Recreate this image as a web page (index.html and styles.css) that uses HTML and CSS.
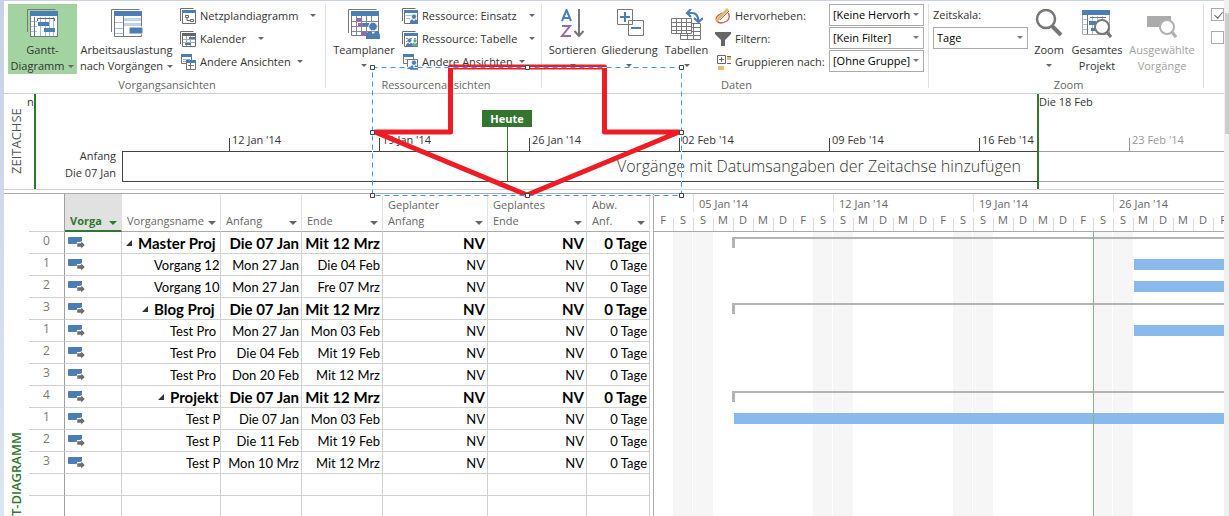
FILE: index.html
```html
<!DOCTYPE html>
<html lang="de">
<head>
<meta charset="utf-8">
<title>Projektplan</title>
<link rel="stylesheet" href="styles.css">
</head>
<body>
<svg class="defs" aria-hidden="true">
  <symbol id="i-link" viewBox="0 0 17 12">
    <path fill="#4a7eb5" d="M1 0h13v5H9v2H1q-1 0-1-1V1q0-1 1-1z"/>
    <path fill="#6e6e6e" d="M9 6h4V4l4 4-4 4v-2H9z" stroke="#fff" stroke-width=".5"/>
  </symbol>
  <symbol id="i-person" viewBox="0 0 14 17">
    <circle cx="7" cy="4.500" r="4.300" stroke="#fff" stroke-width=".8"/>
    <path d="M0 17v-3q0-4 4-5l3 3 3-3q4 1 4 5v3z"/>
  </symbol>
  <symbol id="i-sheet" viewBox="0 0 16 16">
    <path fill="none" stroke="#6e6e6e" d="M.5 13V.5h13"/>
    <path fill="#fff" stroke="#6e6e6e" d="M2.500 2.500h13v13h-13z"/>
    <path fill="#4a7eb5" d="M2 2h14v3H2z"/>
  </symbol>
</svg>
<div class="frame">
<main class="app">
  <header class="ribbon">
    <section class="group views">
      <div class="tools">
        <button class="big active">
          <svg class="ico" viewBox="0 0 32 28" width="32" height="28"><path fill="none" stroke="#777" d="M.5 23V.5h28"/><path fill="#fff" stroke="#777" d="M3.500 3.500h27v24h-27z"/><path stroke="#9fc1e0" d="M4 12.500h6M4 17.500h6M4 22.500h6M13.500 8v19M18.500 8v19M22.500 8v19M26.500 8v19"/><path stroke="#777" d="M7.500 8v19"/><path fill="#4a7eb5" d="M3 2h28v5H3zM11 13h11v4H11zM17 19h11v4H17z"/><path fill="none" stroke="#666" d="M10.500 12V9.500h17V12"/></svg>
          <span>Gantt-<br>Diagramm<i class="caret"></i></span>
        </button>
        <button class="big load">
          <svg class="ico" viewBox="0 0 32 28" width="32" height="28"><path fill="none" stroke="#777" d="M.5 23V.5h28"/><path fill="#fff" stroke="#777" d="M3.500 3.500h27v24h-27z"/><path stroke="#9fc1e0" d="M4 13.500h8M4 19.500h8M4 24.500h8"/><path fill="#bfd6ea" d="M13 9h17v3H13zM13 14h17v3H13z"/><path stroke="#777" d="M12.500 7v20"/><path fill="#4a7eb5" d="M3 2h28v5H3z"/><rect x="18" y="18" width="14" height="7" rx="1" fill="#4a7eb5" stroke="#fff"/></svg>
          <span>Arbeitsauslastung<br>nach Vorgängen<i class="caret"></i></span>
        </button>
        <div class="stack">
          <button class="small"><svg viewBox="0 0 16 16" width="16" height="16"><use href="#i-sheet"/><path fill="none" stroke="#666" d="M5.500 7.500h3v2h-3zM10.500 11.500h3v2h-3zM7 10v2.500h3"/></svg>Netzplandiagramm<i class="caret far"></i></button>
          <button class="small"><svg viewBox="0 0 16 16" width="16" height="16"><use href="#i-sheet"/><path fill="#666" d="M2 2h14v3H2z"/><path stroke="#aaa" d="M3 8.500h12M3 11.500h12M6.500 5v10M10.500 5v10"/><path fill="#4a7eb5" d="M9 6h6v2H9zM5 12h6v2H5z"/></svg>Kalender<i class="caret far"></i></button>
          <button class="small"><svg viewBox="0 0 16 16" width="16" height="16"><path fill="#fff" stroke="#777" d="M1.500.5h10v9h-10z"/><path fill="#4a7eb5" d="M1 0h11v3H1z"/><path stroke="#8aaed0" d="M3 5.500h7M3 7.500h4"/><path fill="#fff" stroke="#777" d="M6.500 6.500h9v9h-9z"/><path fill="#4a7eb5" d="M6 6h10v3H6z"/><path stroke="#777" d="M8 11.500h6M10.500 9v6"/></svg>Andere Ansichten<i class="caret"></i></button>
        </div>
      </div>
      <h2>Vorgangsansichten</h2>
    </section>
    <section class="group resources">
      <div class="tools">
        <button class="big">
          <svg class="ico" viewBox="0 0 32 30" width="32" height="30"><path fill="none" stroke="#777" d="M.5 24V.5h28"/><path fill="#fff" stroke="#777" d="M3.500 3.500h27v23h-27z"/><path fill="none" stroke="#888" d="M4 12.500h26M4 17.500h26M4 22.500h26M8.500 7v19M13.500 7v19M18.500 7v19M23.500 7v19"/><path fill="#4a7eb5" d="M3 2h28v5H3zM15 14h6v3h-6z"/><path fill="#9868b8" d="M8 9h6v3H8zM10 14h5v3h-5zM13 23h5v4h-5z"/><use href="#i-person" x="18" y="13" width="14" height="17" fill="#4a7eb5"/></svg>
          <span>Teamplaner<i class="caret below"></i></span>
        </button>
        <div class="stack">
          <button class="small"><svg viewBox="0 0 16 16" width="16" height="16"><use href="#i-sheet"/><path stroke="#9fc1e0" d="M4 7.500h6M4 10.500h4"/><use href="#i-person" x="8" y="6" width="8" height="10" fill="#4a7eb5"/></svg>Ressource: Einsatz<i class="caret far"></i></button>
          <button class="small"><svg viewBox="0 0 16 16" width="16" height="16"><use href="#i-sheet"/><path stroke="#888" stroke-dasharray="2 2" d="M4 7.500h10M4 10.500h4"/><use href="#i-person" x="4" y="7" width="7" height="9" fill="#4a7eb5"/><use href="#i-person" x="10" y="7" width="6" height="9" fill="#65a58b"/></svg>Ressource: Tabelle<i class="caret far"></i></button>
          <button class="small"><svg viewBox="0 0 16 16" width="16" height="16"><path fill="#fff" stroke="#777" d="M1.500.5h10v9h-10z"/><path fill="#4a7eb5" d="M1 0h11v3H1z"/><path stroke="#8aaed0" d="M3 5.500h7"/><path fill="#fff" stroke="#777" d="M5.500 5.500h10v9h-10z"/><use href="#i-person" x="8" y="6" width="8" height="10" fill="#4a7eb5"/></svg>Andere Ansichten<i class="caret"></i></button>
        </div>
      </div>
      <h2>Ressourcenansichten</h2>
    </section>
    <section class="group data">
      <div class="tools">
        <button class="big">
          <svg class="ico" viewBox="0 0 26 30" width="26" height="30"><path fill="none" stroke="#4a7eb5" stroke-width="2" d="M2 12 6.500 1 11 12M3.500 9h6"/><path fill="none" stroke="#9868b8" stroke-width="2" d="M2 17h8L2 27h9"/><path fill="none" stroke="#777" stroke-width="2" d="M19 0v27M14.500 22l4.500 5 4.500-5"/></svg>
          <span>Sortieren<i class="caret below"></i></span>
        </button>
        <button class="big">
          <svg class="ico" viewBox="0 0 28 28" width="28" height="28"><path fill="#fff" stroke="#777" d="M1.500.5h15v15h-15zM12.500 11.500h15v15h-15z"/><path stroke="#4a7eb5" stroke-width="2" d="M4 8h10M9 3v10M15 19h10"/></svg>
          <span>Gliederung<i class="caret below"></i></span>
        </button>
        <button class="big">
          <svg class="ico" viewBox="0 0 32 32" width="32" height="32"><path fill="#fff" stroke="#777" d="M9.500 14.500h20v16h-20zM9.500 22.500h20M9.500 26.500h20M16.500 14.500v16M22.500 14.500v16M9.500 18.500h20"/><path fill="#fff" stroke="#777" d="M.5 9.500h20v15H.5zM.5 13.500h20M.5 17.500h20M.5 21.500h20M5.500 9.500v15M10.500 9.500v15M15.500 9.500v15"/><path fill="none" stroke="#4a7eb5" stroke-width="2.200" d="M16 4h5q6 0 6.500 8M20 0l-4 4 4 4M23 9l4.500 4L32 9"/></svg>
          <span>Tabellen<i class="caret below"></i></span>
        </button>
        <div class="fields">
          <label for="hl"><svg viewBox="0 0 16 16" width="16" height="16"><path fill="none" stroke="#d9573f" stroke-width="1.300" d="M7 5Q-1 9 2 13t10 0q4-4 1-8"/><path stroke="#e8b76b" stroke-width="3" d="M1 13 13 1"/><path stroke="#777" stroke-width="1" d="m5 12 9-9"/></svg>Hervorheben:</label>
          <span class="pick"><select id="hl"><option>[Keine Hervorh</option></select></span>
          <label for="fl"><svg viewBox="0 0 16 16" width="16" height="16"><path fill="#666" d="M0 1h16v2L10 9v6H6V9L0 3z"/></svg>Filtern:</label>
          <span class="pick"><select id="fl"><option>[Kein Filter]</option></select></span>
          <label for="gr"><svg viewBox="0 0 16 16" width="16" height="16"><path fill="none" stroke="#666" d="M2.500 1.500h8v8h-8zM4 5.500h5M6.500 3v5M12 9.500h4"/><path fill="#e8bd76" d="M12 2h4v4h-4zM3 12h6v4H3z"/><path stroke="#666" d="M12 2.500h4"/></svg>Gruppieren nach:</label>
          <span class="pick"><select id="gr"><option>[Ohne Gruppe]</option></select></span>
        </div>
      </div>
      <h2>Daten</h2>
    </section>
    <section class="group zoom">
      <div class="tools">
        <div class="scale">
          <label for="zs">Zeitskala:</label>
          <span class="pick"><select id="zs"><option>Tage</option></select></span>
        </div>
        <button class="big">
          <svg class="ico" viewBox="0 0 28 28" width="28" height="28"><circle cx="11" cy="10" r="9" fill="#fff" stroke="#777" stroke-width="2.500"/><path stroke="#777" stroke-width="4" d="m17 17 9 9"/></svg>
          <span>Zoom<i class="caret below"></i></span>
        </button>
        <button class="big whole">
          <svg class="ico" viewBox="0 0 30 30" width="30" height="30"><path fill="#fff" stroke="#aaa" d="M.5 1.500h27v24H.5z"/><path stroke="#9fc1e0" d="M1 10.500h5M1 15.500h5M1 20.500h5M10.500 7v18M15.500 7v18M20.500 7v18"/><path stroke="#777" d="M5.500 6v19M8 8.500h16"/><path fill="#4a7eb5" d="M0 1h28v5H0zM7 12h7v4H7zM9 19h5v3H9z"/><circle cx="20" cy="18" r="7" fill="#fff" stroke="#777" stroke-width="2"/><path stroke="#777" stroke-width="3" d="m25 23 4 5"/></svg>
          <span>Gesamtes<br>Projekt</span>
        </button>
        <button class="big picked" disabled>
          <svg class="ico" viewBox="0 0 30 30" width="30" height="30"><path fill="#ababab" d="M0 7h24v11H0z"/><circle cx="20" cy="18" r="7" fill="#fff" stroke="#b0b0b0" stroke-width="2"/><path stroke="#b0b0b0" stroke-width="3" d="m25 23 4 5"/></svg>
          <span>Ausgewählte<br>Vorgänge</span>
        </button>
      </div>
      <h2>Zoom</h2>
    </section>
    <section class="options">
      <input type="checkbox" checked aria-label="Zeitachse">
      <input type="checkbox" aria-label="Details">
    </section>
  </header>

  <section class="timeline">
    <div class="side">ZEITACHSE</div>
    <div class="start"><span>Anfang</span><span>Die 07 Jan</span></div>
    <div class="track">
      <div class="ticks"><span>12 Jan '14</span><span>19 Jan '14</span><span>26 Jan '14</span><span>02 Feb '14</span><span>09 Feb '14</span><span>16 Feb '14</span><span class="out">23 Feb '14</span></div>
      <div class="band"><p class="inside">Vorgänge mit Datumsangaben der Zeitachse hinzufügen</p><p class="outside"></p></div>
    </div>
    <span class="edge from">n</span>
    <span class="edge to">Die 18 Feb</span>
    <span class="today">Heute</span>
  </section>

  <section class="gantt">
    <div class="side green">T-DIAGRAMM</div>
    <table class="tasks">
      <colgroup><col class="c-num"><col class="c-mode"><col class="c-name"><col class="c-date"><col class="c-date"><col class="c-pstart"><col class="c-pend"><col class="c-var"></colgroup>
      <thead><tr><td></td><th class="sel"><div>Vorga</div></th><th><div>Vorgangsname</div></th><th><div>Anfang</div></th><th><div>Ende</div></th><th><div>Geplanter<br>Anfang</div></th><th><div>Geplantes<br>Ende</div></th><th><div>Abw.<br>Anf.</div></th></tr></thead>
      <tbody>
        <tr class="sum"><td>0</td><td><svg width="17" height="12"><use href="#i-link"/></svg></td><td class="l0">Master Proj</td><td>Die 07 Jan</td><td>Mit 12 Mrz</td><td>NV</td><td>NV</td><td>0 Tage</td></tr>
        <tr><td>1</td><td><svg width="17" height="12"><use href="#i-link"/></svg></td><td class="l1">Vorgang 12</td><td>Mon 27 Jan</td><td>Die 04 Feb</td><td>NV</td><td>NV</td><td>0 Tage</td></tr>
        <tr><td>2</td><td><svg width="17" height="12"><use href="#i-link"/></svg></td><td class="l1">Vorgang 10</td><td>Mon 27 Jan</td><td>Fre 07 Mrz</td><td>NV</td><td>NV</td><td>0 Tage</td></tr>
        <tr class="sum"><td>3</td><td><svg width="17" height="12"><use href="#i-link"/></svg></td><td class="l1">Blog Proj</td><td>Die 07 Jan</td><td>Mit 12 Mrz</td><td>NV</td><td>NV</td><td>0 Tage</td></tr>
        <tr><td>1</td><td><svg width="17" height="12"><use href="#i-link"/></svg></td><td class="l2">Test Pro</td><td>Mon 27 Jan</td><td>Mon 03 Feb</td><td>NV</td><td>NV</td><td>0 Tage</td></tr>
        <tr><td>2</td><td><svg width="17" height="12"><use href="#i-link"/></svg></td><td class="l2">Test Pro</td><td>Die 04 Feb</td><td>Mit 19 Feb</td><td>NV</td><td>NV</td><td>0 Tage</td></tr>
        <tr><td>3</td><td><svg width="17" height="12"><use href="#i-link"/></svg></td><td class="l2">Test Pro</td><td>Don 20 Feb</td><td>Mit 12 Mrz</td><td>NV</td><td>NV</td><td>0 Tage</td></tr>
        <tr class="sum"><td>4</td><td><svg width="17" height="12"><use href="#i-link"/></svg></td><td class="l2">Projekt</td><td>Die 07 Jan</td><td>Mit 12 Mrz</td><td>NV</td><td>NV</td><td>0 Tage</td></tr>
        <tr><td>1</td><td><svg width="17" height="12"><use href="#i-link"/></svg></td><td class="l3">Test P</td><td>Die 07 Jan</td><td>Mon 03 Feb</td><td>NV</td><td>NV</td><td>0 Tage</td></tr>
        <tr><td>2</td><td><svg width="17" height="12"><use href="#i-link"/></svg></td><td class="l3">Test P</td><td>Die 11 Feb</td><td>Mit 19 Feb</td><td>NV</td><td>NV</td><td>0 Tage</td></tr>
        <tr><td>3</td><td><svg width="17" height="12"><use href="#i-link"/></svg></td><td class="l3">Test P</td><td>Mon 10 Mrz</td><td>Mit 12 Mrz</td><td>NV</td><td>NV</td><td>0 Tage</td></tr>
        <tr><td></td><td></td><td></td><td></td><td></td><td></td><td></td><td></td></tr>
        <tr><td></td><td></td><td></td><td></td><td></td><td></td><td></td><td></td></tr>
      </tbody>
    </table>
    <div class="chart">
      <div class="cal">
        <div class="weeks"><span>05 Jan '14</span><span>12 Jan '14</span><span>19 Jan '14</span><span>26 Jan '14</span></div>
        <div class="days"><span>F</span><span>S</span><span>S</span><span>M</span><span>D</span><span>M</span><span>D</span><span>F</span><span>S</span><span>S</span><span>M</span><span>D</span><span>M</span><span>D</span><span>F</span><span>S</span><span>S</span><span>M</span><span>D</span><span>M</span><span>D</span><span>F</span><span>S</span><span>S</span><span>M</span><span>D</span><span>M</span><span>D</span><span>F</span></div>
      </div>
      <div class="bars">
        <div class="row"><i class="sumbar" style="margin-left:78px"></i></div>
        <div class="row"><i class="bar" style="margin-left:480px"></i></div>
        <div class="row"><i class="bar" style="margin-left:480px"></i></div>
        <div class="row"><i class="sumbar" style="margin-left:78px"></i></div>
        <div class="row"><i class="bar" style="margin-left:480px"></i></div>
        <div class="row"></div>
        <div class="row"></div>
        <div class="row"><i class="sumbar" style="margin-left:78px"></i></div>
        <div class="row"><i class="bar" style="margin-left:80px"></i></div>
        <i class="now"></i>
      </div>
    </div>
  </section>
</main>
<div class="scroll"><i></i></div>
</div>
<svg class="arrow" viewBox="0 0 316 136" width="316" height="136" aria-hidden="true">
  <path fill="none" stroke="#ee1c24" stroke-width="5" stroke-linejoin="round" d="M81.500 5h154v65H310L158 133 6 70h75.500z"/>
  <path fill="none" stroke="#fff" d="M3.500 5.500h309v128H3.500z"/>
  <path fill="none" stroke="#3399ff" stroke-dasharray="5 4" d="M3.500 5.500h309v128H3.500z"/>
  <path fill="#fff" stroke="#444" d="M1.500 3.500h4v4h-4zM156.500 3.500h4v4h-4zM310.500 3.500h4v4h-4zM1.500 68.500h4v4h-4zM310.500 68.500h4v4h-4zM1.500 131.500h4v4h-4zM156.500 131.500h4v4h-4zM310.500 131.500h4v4h-4z"/>
</svg>
</body>
</html>
```
FILE: styles.css
```css
* { box-sizing: border-box; }
body {
  margin: 0;
  height: 100vh;
  overflow: hidden;
  position: relative;
  font: 11px/16px "Open Sans", "Noto Sans", sans-serif;
  color: #333;
  background: #fff;
}
.defs { position: absolute; width: 0; height: 0; }
.frame {
  display: flex;
  height: 100%;
  padding-left: 4px;
  background: linear-gradient(#c6d1e5, #dbe5f3);
}
.app {
  flex: 1;
  min-width: 0;
  display: flex;
  flex-direction: column;
  background: #fff;
  overflow: hidden;
}
.scroll { width: 5px; padding: 13px 0 0 1px; background: #f0f0f0; }
.scroll i { display: block; height: 121px; background: #cdcdcd; }

/* Ribbon */
.ribbon {
  display: flex;
  flex: none;
  height: 94px;
  padding-top: 3px;
  border-top: 1px solid #c6d1e5;
  border-bottom: 1px solid #d0d0d0;
}
.group {
  flex: none;
  display: flex;
  flex-direction: column;
  justify-content: space-between;
  height: 88px;
  background: linear-gradient(#e1e1e1, #e1e1e1) right top / 1px 84px no-repeat;
}
.views { width: 322px; padding-left: 4px; }
.resources { width: 216px; padding-left: 4px; }
.data { width: 387px; padding-left: 2px; }
.zoom { width: 275px; padding-left: 4px; }
.group h2 {
  margin: 0;
  font: inherit;
  line-height: 14px;
  color: #666;
  text-align: center;
}
.tools { display: flex; align-items: flex-start; }
button {
  border: 0;
  margin: 0;
  padding: 0;
  background: none;
  font: inherit;
  color: inherit;
  white-space: nowrap;
}
.big {
  display: flex;
  flex-direction: column;
  justify-content: space-between;
  align-items: center;
  height: 70px;
  padding-top: 5px;
}
.big > span { height: 32px; }
.big:disabled { color: #a0a0a0; }
.active { width: 69px; background: #a3d3a0; }
.load { width: 99px; }
.resources .big { width: 68px; }
.data .big { width: 57px; }
.zoom .big { width: 42px; }
.zoom .whole { width: 54px; }
.zoom .picked { width: 76px; }
.caret {
  display: inline-block;
  margin-left: 4px;
  vertical-align: 2px;
  border: 3px solid transparent;
  border-top: 3px solid #666;
  border-bottom: 0;
}
.below { display: block; width: 6px; margin: 6px auto 0; }
.stack { display: flex; flex-direction: column; padding-left: 4px; }
.small { display: flex; align-items: center; gap: 4px; height: 23px; }
.small svg { flex: none; }
.small .caret { margin-left: 2px; }
.small .far { margin-left: 8px; }
.fields {
  flex: 1;
  display: grid;
  grid-template-columns: 1fr 95px;
  padding: 0 5px 0 0;
}
.fields label { display: flex; align-items: center; gap: 4px; height: 23px; white-space: nowrap; }
.pick { position: relative; display: block; width: 95px; height: 22px; }
.pick::after {
  content: "";
  position: absolute;
  right: 5px;
  top: 9px;
  border: 3px solid transparent;
  border-top-color: #777;
  border-bottom: 0;
}
select {
  appearance: none;
  width: 100%;
  height: 100%;
  margin: 0;
  padding: 0 12px 0 3px;
  border: 1px solid #ababab;
  border-radius: 0;
  background: #fff;
  color: #000;
  font: inherit;
}
.scale { width: 95px; }
.scale label { display: block; height: 23px; line-height: 22px; }
.options { display: flex; flex-direction: column; gap: 10px; padding: 4px 0 0 7px; }
.options input {
  appearance: none;
  flex: none;
  width: 13px;
  height: 13px;
  margin: 0;
  border: 1px solid #ababab;
  background: #fff;
}
.options input:checked::after {
  content: "";
  display: block;
  width: 4px;
  height: 7px;
  margin: 1px 0 0 4px;
  border: solid #666;
  border-width: 0 1px 1px 0;
  transform: rotate(40deg);
}

/* Timeline */
.side {
  flex: none;
  width: 25px;
  writing-mode: vertical-rl;
  transform: rotate(180deg);
  line-height: 25px;
  font-size: 13px;
  text-align: center;
  color: #555;
}
.green { color: #2f762f; font-weight: 600; text-align: left; }
.timeline {
  position: relative;
  display: flex;
  flex: none;
  height: 96px;
  border-bottom: 1px solid #d0d0d0;
}
.start {
  flex: none;
  width: 93px;
  padding: 53px 6px 0 0;
  display: flex;
  flex-direction: column;
  text-align: right;
  line-height: 17px;
}
.track { flex: 1; min-width: 0; padding-top: 38px; }
.ticks { display: flex; padding-left: 107px; overflow: hidden; }
.ticks span {
  flex: none;
  width: 150px;
  height: 19px;
  padding-left: 3px;
  background: linear-gradient(transparent 6px, #444 6px) left / 1px 100% no-repeat;
}
.ticks .out { color: #999; background-image: linear-gradient(transparent 6px, #999 6px); }
.band { display: flex; height: 31px; }
.band p { margin: 0; }
.inside {
  width: 916px;
  padding-right: 16px;
  border: 1px solid #444;
  font: 300 16px/29px "Open Sans", sans-serif;
  text-align: right;
}
.outside { flex: 1; border: solid #a0a0a0; border-width: 1px 0; }
.edge { position: absolute; top: 0; height: 95px; }
.from { left: 23px; border-right: 2px solid #2f762f; }
.to { left: 1033px; border-left: 2px solid #2f762f; }
.today {
  position: absolute;
  left: 478px;
  top: 16px;
  width: 50px;
  background: #31752f;
  color: #fff;
  font-weight: 700;
  line-height: 17px;
  text-align: center;
}
.today::after {
  content: "";
  position: absolute;
  left: 25px;
  top: 17px;
  height: 55px;
  border-left: 1px solid #31752f;
}

/* Task table and chart */
.gantt {
  flex: 1;
  min-height: 0;
  display: flex;
  margin-top: 3px;
  border-top: 1px solid #ababab;
  overflow: hidden;
}
.tasks {
  flex: none;
  align-self: flex-start;
  width: 621px;
  table-layout: fixed;
  border-collapse: separate;
  border-spacing: 0;
  font: 13px/20px Lato, sans-serif;
  color: #000;
}
.c-num { width: 36px; }
.c-mode { width: 57px; }
.c-name { width: 99px; }
.c-date { width: 81px; }
.c-pstart { width: 105px; }
.c-pend { width: 99px; }
.c-var { width: 63px; }
th {
  position: relative;
  height: 38px;
  padding: 0 16px 2px 5px;
  border-bottom: 1px solid #ababab;
  border-right: 1px solid #e1e1e1;
  font: 11px/16px "Open Sans", sans-serif;
  color: #666;
  text-align: left;
  vertical-align: bottom;
}
th div { overflow: hidden; white-space: nowrap; }
th::after {
  content: "";
  position: absolute;
  right: 4px;
  bottom: 6px;
  border: 4px solid transparent;
  border-top-color: #666;
  border-bottom: 0;
}
.sel { padding-bottom: 1px; background: #e1e1e1; border-bottom: 2px solid #2f762f; color: #2f762f; font-weight: 700; }
.sel::after { bottom: 5px; border-top-color: #2f762f; }
td {
  height: 22px;
  padding: 1px 2px 0 0;
  border: solid #d0d0d0;
  border-width: 0 1px 1px 0;
  text-align: right;
  white-space: nowrap;
  overflow: hidden;
}
td:first-child {
  padding: 0;
  border-right-color: #a0a0a0;
  font: 12px/18px "Open Sans", sans-serif;
  vertical-align: top;
  text-align: center;
  color: #777;
}
td:nth-child(2) { padding: 0 0 0 3px; }
td svg { display: block; }
td:nth-child(3) { text-align: left; }
.sum { font-size: 15px; font-weight: 700; }
td.l0 { padding-left: 16px; }
td.l1 { padding-left: 32px; }
td.l2 { padding-left: 48px; }
td.l3 { padding-left: 64px; }
.sum td:nth-child(3)::before {
  content: "";
  display: inline-block;
  margin: 0 6px 0 -12px;
  vertical-align: 3px;
  border: solid transparent;
  border-width: 0 0 6px 6px;
  border-bottom-color: #333;
}
.chart {
  flex: 1;
  min-width: 0;
  display: flex;
  flex-direction: column;
  margin-left: 3px;
  border-left: 1px solid #ababab;
  overflow: hidden;
}
.cal { flex: none; height: 38px; border-bottom: 1px solid #ababab; color: #666; }
.weeks { display: flex; padding-left: 39px; height: 18px; }
.weeks span { flex: none; width: 140px; padding: 2px 0 0 5px; border-left: 1px solid #ddd; }
.days { display: flex; height: 19px; }
.days span {
  flex: none;
  width: 20px;
  padding-right: 2px;
  text-align: center;
  background: linear-gradient(#ddd, #ddd) right bottom / 1px 13px no-repeat;
}
.bars {
  flex: 1;
  position: relative;
  background: linear-gradient(90deg, #f6f6f6 19px, #fff 19px 20px, #f6f6f6 20px 40px, transparent 40px) 19px 0 / 140px 100% repeat-x;
}
.row { display: flex; height: 22px; padding-top: 5px; }
.bar { flex: 1; height: 11px; background: #8ab9ec; }
.sumbar { flex: 1; height: 11px; background: linear-gradient(#b3b3b3, #b3b3b3) left / 3px 100% no-repeat, linear-gradient(#b3b3b3, #b3b3b3) top / 100% 2px no-repeat; }
.now { position: absolute; left: 439px; top: 0; bottom: 0; border-left: 1px solid #8ab58a; }

/* Drawn annotation over the window */
.arrow { position: absolute; left: 369px; top: 62px; }
```
